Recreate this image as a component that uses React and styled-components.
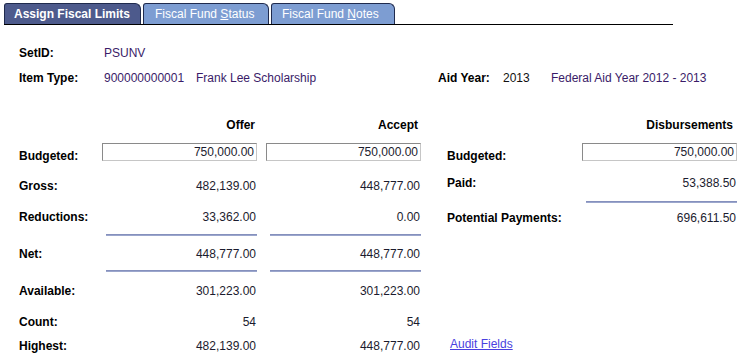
import React from 'react';
import styled, { createGlobalStyle } from 'styled-components';

const GlobalStyle = createGlobalStyle`
  html, body {
    margin: 0;
    padding: 0;
    background: #fff;
  }
  body {
    font-family: "Liberation Sans", Arial, sans-serif;
    font-size: 12px;
    color: #000;
  }
`;

const Page = styled.div`
  width: 744px;
  height: 357px;
  overflow: hidden;
  position: relative;
`;

const TabBar = styled.div`
  display: flex;
  align-items: flex-end;
  gap: 2px;
  margin: 3px 0 0 4px;
  width: 669px;
  height: 21px;
  border-bottom: 1px solid #000;
`;

const Tab = styled.div`
  box-sizing: border-box;
  height: 21px;
  width: ${({ $w }) => $w}px;
  padding-left: ${({ $pad }) => $pad}px;
  display: flex;
  align-items: center;
  border: 1px solid #1f2a4d;
  border-bottom: none;
  border-top-left-radius: 3px;
  border-top-right-radius: 6px;
  background: ${({ $active }) => ($active ? '#4d5a8c' : '#7d9dd2')};
  color: #fff;
  font-weight: ${({ $active }) => ($active ? 700 : 400)};
  font-size: 12px;
  white-space: nowrap;

  u {
    text-decoration: underline;
  }
`;

const Info = styled.div`
  margin-top: 15px;
  padding-left: 19px;
  display: flex;
  flex-direction: column;
`;

const InfoRow = styled.div`
  display: grid;
  grid-template-columns: 85px 92px 242px 65px 48px auto;
  height: ${({ $h }) => $h}px;
  align-items: center;
`;

const Label = styled.span`
  font-weight: 700;
  white-space: nowrap;
  margin-top: ${({ $shift }) => $shift || 0}px;
`;

const Desc = styled.span`
  color: ${({ $plain }) => ($plain ? '#111' : '#3a1b68')};
  white-space: nowrap;
`;

const Main = styled.div`
  display: flex;
  margin-top: 23px;
`;

const LeftPanel = styled.div`
  padding-left: 19px;
  display: flex;
  flex-direction: column;
`;

const RightPanel = styled.div`
  margin-left: 26px;
  display: flex;
  flex-direction: column;
`;

const Row = styled.div`
  display: grid;
  grid-template-columns: ${({ $cols }) => $cols};
  column-gap: 9px;
  height: ${({ $h }) => $h}px;
  align-items: center;
`;

const Head = styled.span`
  font-weight: 700;
  text-align: right;
  padding-right: ${({ $pr }) => $pr || 2}px;
`;

const Amount = styled.span`
  text-align: right;
  color: #1b1b2e;
  padding-right: 1px;
`;

const Field = styled.div`
  box-sizing: border-box;
  height: 18px;
  border: 1px solid #c6c6c6;
  border-top-color: #8a8a8a;
  border-left-color: #8a8a8a;
  text-align: right;
  padding-right: 2px;
  line-height: 16px;
  color: #1b1b2e;
`;

const Rule = styled.div`
  height: 2px;
  margin-left: 4px;
  background: #9ba6cc;
  border-top: 1px solid #8590bd;
  box-sizing: border-box;
`;

const Link = styled.a`
  color: #4a3fe0;
  text-decoration: underline;
  cursor: pointer;
  margin-left: 3px;
  white-space: nowrap;
`;

const LEFT_COLS = '74px 155px 155px';
const RIGHT_COLS = '126px 155px';

export default function App() {
  return (
    <Page>
      <GlobalStyle />
      <TabBar>
        <Tab $active $w={137} $pad={9}>Assign Fiscal Limits</Tab>
        <Tab $w={126} $pad={11}>
          Fiscal Fund&nbsp;<u>S</u>tatus
        </Tab>
        <Tab $w={124} $pad={10}>
          Fiscal Fund&nbsp;<u>N</u>otes
        </Tab>
      </TabBar>

      <Info>
        <InfoRow $h={26}>
          <Label>SetID:</Label>
          <Desc>PSUNV</Desc>
        </InfoRow>
        <InfoRow $h={24}>
          <Label>Item Type:</Label>
          <Desc>900000000001</Desc>
          <Desc>Frank Lee Scholarship</Desc>
          <Label>Aid Year:</Label>
          <Desc $plain>2013</Desc>
          <Desc>Federal Aid Year 2012 - 2013</Desc>
        </InfoRow>
      </Info>

      <Main>
        <LeftPanel>
          <Row $cols={LEFT_COLS} $h={24}>
            <span />
            <Head>Offer</Head>
            <Head $pr={3}>Accept</Head>
          </Row>
          <Row $cols={LEFT_COLS} $h={30}>
            <Label $shift={7}>Budgeted:</Label>
            <Field>750,000.00</Field>
            <Field>750,000.00</Field>
          </Row>
          <Row $cols={LEFT_COLS} $h={38}>
            <Label>Gross:</Label>
            <Amount>482,139.00</Amount>
            <Amount>448,777.00</Amount>
          </Row>
          <Row $cols={LEFT_COLS} $h={24}>
            <Label>Reductions:</Label>
            <Amount>33,362.00</Amount>
            <Amount>0.00</Amount>
          </Row>
          <Row $cols={LEFT_COLS} $h={12}>
            <span />
            <Rule />
            <Rule />
          </Row>
          <Row $cols={LEFT_COLS} $h={26}>
            <Label>Net:</Label>
            <Amount>448,777.00</Amount>
            <Amount>448,777.00</Amount>
          </Row>
          <Row $cols={LEFT_COLS} $h={8}>
            <span />
            <Rule />
            <Rule />
          </Row>
          <Row $cols={LEFT_COLS} $h={32}>
            <Label>Available:</Label>
            <Amount>301,223.00</Amount>
            <Amount>301,223.00</Amount>
          </Row>
          <Row $cols={LEFT_COLS} $h={30}>
            <Label>Count:</Label>
            <Amount>54</Amount>
            <Amount>54</Amount>
          </Row>
          <Row $cols={LEFT_COLS} $h={18}>
            <Label>Highest:</Label>
            <Amount>482,139.00</Amount>
            <Amount>448,777.00</Amount>
          </Row>
        </LeftPanel>

        <RightPanel>
          <Row $cols={RIGHT_COLS} $h={24}>
            <span />
            <Head $pr={4}>Disbursements</Head>
          </Row>
          <Row $cols={RIGHT_COLS} $h={30}>
            <Label $shift={7}>Budgeted:</Label>
            <Field>750,000.00</Field>
          </Row>
          <Row $cols={RIGHT_COLS} $h={32}>
            <Label>Paid:</Label>
            <Amount>53,388.50</Amount>
          </Row>
          <Row $cols={RIGHT_COLS} $h={5}>
            <span />
            <Rule />
          </Row>
          <Row $cols={RIGHT_COLS} $h={28}>
            <Label>Potential Payments:</Label>
            <Amount>696,611.50</Amount>
          </Row>
          <Row $cols={RIGHT_COLS} $h={103}>
            <span />
          </Row>
          <Row $cols={RIGHT_COLS} $h={18}>
            <Link>Audit Fields</Link>
          </Row>
        </RightPanel>
      </Main>
    </Page>
  );
}
